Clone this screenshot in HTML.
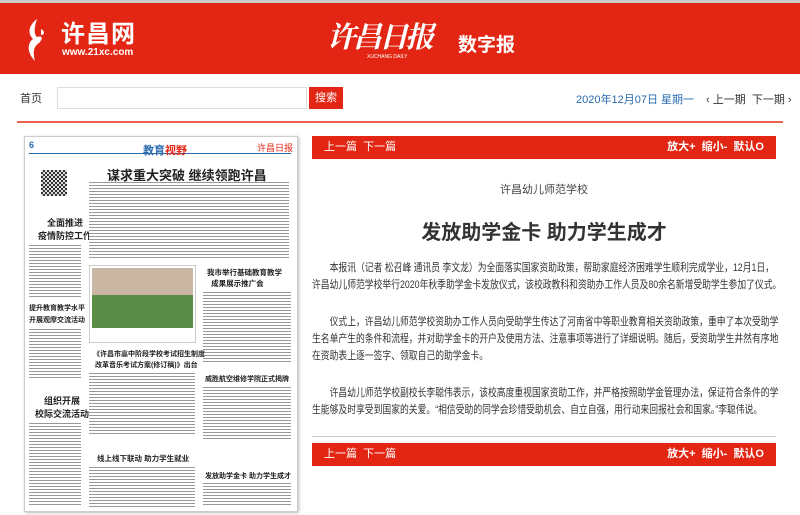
<!DOCTYPE html>
<html><head><meta charset="utf-8"><style>
*{margin:0;padding:0;box-sizing:border-box}
body{width:800px;height:515px;overflow:hidden;background:#fff;font-family:"Liberation Sans","Noto Sans CJK SC",sans-serif;position:relative}
.abs{position:absolute}
.hdr{left:0;top:0;width:800px;height:74px;background:#e32614;border-top:3px solid #ccc}
.txt{background:repeating-linear-gradient(#999 0 1px,#fff 1px 3px)}
.bar{background:#e32614;color:#fff;font-size:11px;height:23px;line-height:23px}
.p{left:312px;width:640px;font-size:10.8px;color:#333;line-height:17px;white-space:nowrap;transform:scaleX(0.815);transform-origin:0 0}
</style></head><body>
<div class="abs hdr">
 <svg class="abs" style="left:24px;top:14px" width="22" height="46" viewBox="0 0 20 46"><path d="M12 2 C4 8 2 16 8 22 C2 26 2 36 10 44 C8 36 8 30 14 26 C18 22 18 18 12 20 C8 16 10 8 12 2Z" fill="#fff"/><path d="M16 12 C20 14 20 18 16 18Z" fill="#fff"/></svg>
 <div class="abs" style="left:61px;top:11px;color:#fff;font-size:24px;font-weight:bold;letter-spacing:1px">许昌网</div>
 <div class="abs" style="left:62px;top:44px;color:#fff;font-size:10px;font-weight:bold">www.21xc.com</div>
 <div class="abs" style="left:327px;top:12px;color:#fff;font-size:29px;font-family:'Noto Serif CJK SC',serif;font-style:italic;font-weight:bold;letter-spacing:-3px">许昌日报</div>
 <div class="abs" style="left:367px;top:51px;color:#fff;font-size:5px">XUCHANG DAILY</div>
 <div class="abs" style="left:458px;top:27px;color:#fff;font-size:19px;font-weight:bold">数字报</div>
</div>
<div class="abs" style="left:20px;top:90px;font-size:11px;color:#333">首页</div>
<div class="abs" style="left:57px;top:87px;width:250px;height:22px;border:1px solid #ddd"></div>
<div class="abs" style="left:309px;top:87px;width:34px;height:22px;background:#e32614;color:#fff;font-size:11px;line-height:22px;text-align:center">搜索</div>
<div class="abs" style="left:576px;top:91px;font-size:11px;color:#2a6bb0">2020年12月07日 星期一</div>
<div class="abs" style="left:706px;top:91px;font-size:11px;color:#333">‹ 上一期 &nbsp;下一期 ›</div>
<div class="abs" style="left:17px;top:121px;width:766px;height:2px;background:#f06050"></div>

<div class="abs" style="left:24px;top:136px;width:274px;height:376px;border:1px solid #ccc;box-shadow:1px 1px 3px #bbb;background:#fff;overflow:hidden">
 <div class="abs" style="left:4px;top:3px;font-size:9px;color:#2a6bb0;font-weight:bold">6</div>
 <div class="abs" style="left:4px;top:16px;width:262px;height:1px;background:#2a6bb0"></div>
 <div class="abs" style="left:118px;top:5px;font-size:11px;color:#2a6bb0;font-weight:bold">教育<span style="color:#e32614">视野</span></div>
 <div class="abs" style="left:232px;top:4px;font-size:9px;color:#e32614">许昌日报</div>
 <div class="abs" style="left:16px;top:33px;width:26px;height:26px;background:repeating-conic-gradient(#333 0 25%,#ddd 0 50%) 0 0/4px 4px"></div>
 <div class="abs" style="left:82px;top:28px;font-size:13px;font-weight:bold;color:#222">谋求重大突破 继续领跑许昌</div>
 <div class="abs" style="left:13px;top:80px;font-size:9px;font-weight:bold;color:#222;line-height:13px;text-align:center">全面推进<br>疫情防控工作</div>
 <div class="abs txt" style="left:4px;top:108px;width:52px;height:52px"></div>
 <div class="abs" style="left:4px;top:166px;font-size:7px;font-weight:bold;color:#222;line-height:12px">提升教育教学水平<br>开展观摩交流活动</div>
 <div class="abs txt" style="left:4px;top:192px;width:52px;height:50px"></div>
 <div class="abs" style="left:10px;top:258px;font-size:9px;font-weight:bold;color:#222;line-height:13px;text-align:center">组织开展<br>校际交流活动</div>
 <div class="abs txt" style="left:4px;top:286px;width:52px;height:84px"></div>
 <div class="abs txt" style="left:64px;top:45px;width:200px;height:78px"></div>
 <div class="abs" style="left:64px;top:128px;width:107px;height:78px;background:#fff;border:1px solid #ccc"><div style="margin:2px;height:60px;background:linear-gradient(#c9b7a4 0 45%,#5a8c48 45%)"></div></div>
 <div class="abs" style="left:182px;top:130px;font-size:7.5px;font-weight:bold;line-height:11px;color:#222">我市举行基础教育教学<br>&nbsp;&nbsp;成果展示推广会</div>
 <div class="abs txt" style="left:178px;top:155px;width:88px;height:70px"></div>
 <div class="abs" style="left:68px;top:212px;font-size:7px;font-weight:bold;line-height:11px;color:#222">《许昌市高中阶段学校考试招生制度<br>&nbsp;改革音乐考试方案(修订稿)》出台</div>
 <div class="abs txt" style="left:64px;top:236px;width:106px;height:62px"></div>
 <div class="abs" style="left:180px;top:237px;font-size:7px;font-weight:bold;color:#222">威胜航空维修学院正式揭牌</div>
 <div class="abs txt" style="left:178px;top:250px;width:88px;height:54px"></div>
 <div class="abs" style="left:72px;top:316px;font-size:7.5px;font-weight:bold;color:#222">线上线下联动 助力学生就业</div>
 <div class="abs txt" style="left:64px;top:330px;width:106px;height:40px"></div>
 <div class="abs" style="left:180px;top:334px;font-size:7px;font-weight:bold;color:#222">发放助学金卡 助力学生成才</div>
 <div class="abs txt" style="left:178px;top:346px;width:88px;height:24px"></div>
</div>

<div class="abs bar" style="left:312px;top:136px;width:464px"><span style="margin-left:12px">上一篇 &nbsp;下一篇</span><span style="float:right;margin-right:12px;font-weight:bold">放大+ &nbsp;缩小- &nbsp;默认O</span></div>
<div class="abs" style="left:312px;top:181px;width:464px;text-align:center;font-size:11px;color:#444">许昌幼儿师范学校</div>
<div class="abs" style="left:312px;top:216px;width:464px;text-align:center;font-size:20px;font-weight:bold;color:#333">发放助学金卡 助力学生成才</div>
<div class="abs p" style="top:260px">&emsp;&emsp;本报讯（记者 松召峰 通讯员 李文龙）为全面落实国家资助政策，帮助家庭经济困难学生顺利完成学业，12月1日，<br>许昌幼儿师范学校举行2020年秋季助学金卡发放仪式，该校政教科和资助办工作人员及80余名新增受助学生参加了仪式。</div>
<div class="abs p" style="top:314px">&emsp;&emsp;仪式上，许昌幼儿师范学校资助办工作人员向受助学生传达了河南省中等职业教育相关资助政策，重申了本次受助学<br>生名单产生的条件和流程，并对助学金卡的开户及使用方法、注意事项等进行了详细说明。随后，受资助学生井然有序地<br>在资助表上逐一签字、领取自己的助学金卡。</div>
<div class="abs p" style="top:385px">&emsp;&emsp;许昌幼儿师范学校副校长李聪伟表示，该校高度重视国家资助工作，并严格按照助学金管理办法，保证符合条件的学<br>生能够及时享受到国家的关爱。“相信受助的同学会珍惜受助机会、自立自强，用行动来回报社会和国家。”李聪伟说。</div>
<div class="abs" style="left:312px;top:436px;width:464px;height:1px;background:#ccc"></div>
<div class="abs bar" style="left:312px;top:443px;width:464px"><span style="margin-left:12px">上一篇 &nbsp;下一篇</span><span style="float:right;margin-right:12px;font-weight:bold">放大+ &nbsp;缩小- &nbsp;默认O</span></div>
</body></html>
